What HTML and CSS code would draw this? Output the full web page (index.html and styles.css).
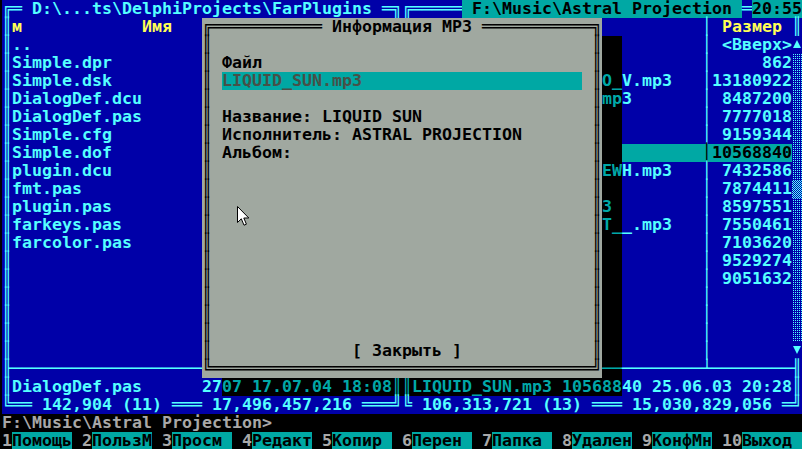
FILE: index.html
```html
<!DOCTYPE html>
<html lang="ru">
<head>
<meta charset="utf-8">
<title>Far Manager — Информация MP3</title>
<link rel="stylesheet" href="styles.css">
</head>
<body>
<div class="screen">
  <div class="panels">
    <section class="panel">
      <div class="row"><span class="ln">╔═</span><span> D:\...ts\DelphiProjects\FarPlugins </span><span class="ln">═╗</span></div>
      <div class="row"><span class="v">║</span><span class="fill y">м            Имя</span><span class="v"></span></div>
      <div class="row"><span class="v">║</span><span class="fill">..</span><span class="v"></span></div>
      <div class="row"><span class="v">║</span><span class="fill">Simple.dpr</span><span class="v"></span></div>
      <div class="row"><span class="v">║</span><span class="fill">Simple.dsk</span><span class="v"></span></div>
      <div class="row"><span class="v">║</span><span class="fill">DialogDef.dcu</span><span class="v"></span></div>
      <div class="row"><span class="v">║</span><span class="fill">DialogDef.pas</span><span class="v"></span></div>
      <div class="row"><span class="v">║</span><span class="fill">Simple.cfg</span><span class="v"></span></div>
      <div class="row"><span class="v">║</span><span class="fill">Simple.dof</span><span class="v"></span></div>
      <div class="row"><span class="v">║</span><span class="fill">plugin.dcu</span><span class="v"></span></div>
      <div class="row"><span class="v">║</span><span class="fill">fmt.pas</span><span class="v"></span></div>
      <div class="row"><span class="v">║</span><span class="fill">plugin.pas</span><span class="v"></span></div>
      <div class="row"><span class="v">║</span><span class="fill">farkeys.pas</span><span class="v"></span></div>
      <div class="row"><span class="v">║</span><span class="fill">farcolor.pas</span><span class="v"></span></div>
      <div class="row"><span class="v">║</span><span class="fill"></span><span class="v"></span></div>
      <div class="row"><span class="v">║</span><span class="fill"></span><span class="v"></span></div>
      <div class="row"><span class="v">║</span><span class="fill"></span><span class="v"></span></div>
      <div class="row"><span class="v">║</span><span class="fill"></span><span class="v"></span></div>
      <div class="row"><span class="v">║</span><span class="fill"></span><span class="v"></span></div>
      <div class="row"><span class="v">║</span><span class="fill"></span><span class="v"></span></div>
      <div class="row"><span class="ln">╟───────────────────</span><span class="fill"></span></div>
      <div class="row"><span class="v">║</span><span class="fill">DialogDef.pas      27</span><span class="sh">07 17.07.04 18:08</span><span class="v sh">║</span></div>
      <div class="row"><span class="ln">╚══</span><span> 142,904 (11) </span><span class="ln">═══</span><span> 17,496,457,216 </span><span class="ln">═══╝</span></div>
    </section>
    <section class="panel">
      <div class="row"><span class="ln">╔═════</span><span class="hi"> F:\Music\Astral Projection </span><span class="ln">═</span><span class="hi">20:55</span></div>
      <div class="row"><span class="v"></span><span class="na"></span><span class="ns"></span><span class="nb"></span><span class="v">│</span><span class="sz y">Размер </span><span class="v">║</span></div>
      <div class="row"><span class="v"></span><span class="na"></span><span class="ns sh"></span><span class="nb"></span><span class="v">│</span><span class="sz">&lt;Вверх&gt;</span><span class="sb up"></span></div>
      <div class="row"><span class="v"></span><span class="na"></span><span class="ns sh"></span><span class="nb"></span><span class="v">│</span><span class="sz">862</span><span class="sb trk"></span></div>
      <div class="row"><span class="v"></span><span class="na"></span><span class="ns sh">O_</span><span class="nb">V.mp3</span><span class="v">│</span><span class="sz">13180922</span><span class="sb trk"></span></div>
      <div class="row"><span class="v"></span><span class="na"></span><span class="ns sh">mp</span><span class="nb">3</span><span class="v">│</span><span class="sz">8487200</span><span class="sb trk"></span></div>
      <div class="row"><span class="v"></span><span class="na"></span><span class="ns sh"></span><span class="nb"></span><span class="v">│</span><span class="sz">7777018</span><span class="sb trk"></span></div>
      <div class="row"><span class="v"></span><span class="na"></span><span class="ns sh"></span><span class="nb"></span><span class="v">│</span><span class="sz">9159344</span><span class="sb trk"></span></div>
      <div class="row"><span class="v"></span><span class="na hi"></span><span class="ns sh"></span><span class="nb hi"></span><span class="v hi">│</span><span class="sz hi">10568840</span><span class="sb trk"></span></div>
      <div class="row"><span class="v"></span><span class="na"></span><span class="ns sh">EW</span><span class="nb">H.mp3</span><span class="v">│</span><span class="sz">7432586</span><span class="sb trk"></span></div>
      <div class="row"><span class="v"></span><span class="na"></span><span class="ns sh"></span><span class="nb"></span><span class="v">│</span><span class="sz">7874411</span><span class="sb thumb"></span></div>
      <div class="row"><span class="v"></span><span class="na"></span><span class="ns sh">3</span><span class="nb"></span><span class="v">│</span><span class="sz">8597551</span><span class="sb trk"></span></div>
      <div class="row"><span class="v"></span><span class="na"></span><span class="ns sh">T_</span><span class="nb">_.mp3</span><span class="v">│</span><span class="sz">7550461</span><span class="sb trk"></span></div>
      <div class="row"><span class="v"></span><span class="na"></span><span class="ns sh"></span><span class="nb"></span><span class="v">│</span><span class="sz">7103620</span><span class="sb trk"></span></div>
      <div class="row"><span class="v"></span><span class="na"></span><span class="ns sh"></span><span class="nb"></span><span class="v">│</span><span class="sz">9529274</span><span class="sb trk"></span></div>
      <div class="row"><span class="v"></span><span class="na"></span><span class="ns sh"></span><span class="nb"></span><span class="v">│</span><span class="sz">9051632</span><span class="sb trk"></span></div>
      <div class="row"><span class="v"></span><span class="na"></span><span class="ns sh"></span><span class="nb"></span><span class="v">│</span><span class="sz"></span><span class="sb trk"></span></div>
      <div class="row"><span class="v"></span><span class="na"></span><span class="ns sh"></span><span class="nb"></span><span class="v">│</span><span class="sz"></span><span class="sb trk"></span></div>
      <div class="row"><span class="v"></span><span class="na"></span><span class="ns sh"></span><span class="nb"></span><span class="v">│</span><span class="sz"></span><span class="sb trk"></span></div>
      <div class="row"><span class="v"></span><span class="na"></span><span class="ns sh"></span><span class="nb"></span><span class="v">│</span><span class="sz"></span><span class="sb dn"></span></div>
      <div class="row"><span class="v"></span><span class="na"></span><span class="ln sh">──</span><span class="ln">────────┴────────╢</span></div>
      <div class="row"><span class="v sh">║</span><span class="sh">LIQUID_SUN.mp3 105688</span><span>40 25.06.03 20:28</span><span class="v">║</span></div>
      <div class="row"><span class="ln">╚</span><span> 106,313,721 (13) </span><span class="ln">═══</span><span> 15,030,829,056 </span><span class="ln">═╝</span></div>
    </section>
  </div>

  <div class="row cmd"><span>F:\Music\Astral Projection&gt;</span></div>

  <div class="row keybar">
    <span class="key"><span class="kn">1</span><span class="kl">Помощь</span></span>
    <span class="key"><span class="kn">2</span><span class="kl">ПользМ</span></span>
    <span class="key"><span class="kn">3</span><span class="kl">Просм</span></span>
    <span class="key"><span class="kn">4</span><span class="kl">Редакт</span></span>
    <span class="key"><span class="kn">5</span><span class="kl">Копир</span></span>
    <span class="key"><span class="kn">6</span><span class="kl">Перен</span></span>
    <span class="key"><span class="kn">7</span><span class="kl">Папка</span></span>
    <span class="key"><span class="kn">8</span><span class="kl">Удален</span></span>
    <span class="key"><span class="kn">9</span><span class="kl">КонфМн</span></span>
    <span class="key"><span class="kn">10</span><span class="kl">Выход</span></span>
  </div>

  <div class="dialog">
    <div class="row"><span class="ln">╔═══════════</span><span> Информация MP3 </span><span class="ln">═══════════╗</span></div>
    <div class="row"><span class="v">║</span><span class="fill"></span><span class="v">║</span></div>
    <div class="row"><span class="v">║</span><span class="fill"> Файл</span><span class="v">║</span></div>
    <div class="row"><span class="v">║</span><span class="gap"> </span><span class="edit">LIQUID_SUN.mp3</span><span class="fill"></span><span class="v">║</span></div>
    <div class="row"><span class="v">║</span><span class="fill"></span><span class="v">║</span></div>
    <div class="row"><span class="v">║</span><span class="fill"> Название: LIQUID SUN</span><span class="v">║</span></div>
    <div class="row"><span class="v">║</span><span class="fill"> Исполнитель: ASTRAL PROJECTION</span><span class="v">║</span></div>
    <div class="row"><span class="v">║</span><span class="fill"> Альбом:</span><span class="v">║</span></div>
    <div class="row"><span class="v">║</span><span class="fill"></span><span class="v">║</span></div>
    <div class="row"><span class="v">║</span><span class="fill"></span><span class="v">║</span></div>
    <div class="row"><span class="v">║</span><span class="fill"></span><span class="v">║</span></div>
    <div class="row"><span class="v">║</span><span class="fill"></span><span class="v">║</span></div>
    <div class="row"><span class="v">║</span><span class="fill"></span><span class="v">║</span></div>
    <div class="row"><span class="v">║</span><span class="fill"></span><span class="v">║</span></div>
    <div class="row"><span class="v">║</span><span class="fill"></span><span class="v">║</span></div>
    <div class="row"><span class="v">║</span><span class="fill"></span><span class="v">║</span></div>
    <div class="row"><span class="v">║</span><span class="fill"></span><span class="v">║</span></div>
    <div class="row"><span class="v">║</span><span class="fill"></span><span class="v">║</span></div>
    <div class="row"><span class="v">║</span><span class="fill">              [ Закрыть ]</span><span class="v">║</span></div>
    <div class="row"><span class="ln">╚══════════════════════════════════════╝</span></div>
  </div>

  <svg class="mouse" width="13" height="21" viewBox="0 0 13 21" aria-hidden="true">
    <path d="M0.5 0.5 V16.5 L4.3 12.8 L7 19.2 L9.4 18.2 L6.8 12 H11.8 Z" fill="#fff" stroke="#000" stroke-width="1" stroke-linejoin="miter"/>
  </svg>
</div>
</body>
</html>
```
FILE: styles.css
```css
* { box-sizing: border-box; }

html, body {
  margin: 0;
  background: #000;
}

body { overflow: hidden; }

.screen {
  position: relative;
  width: 800px;
  height: 450px;
  margin-left: 2px;
  font-family: "DejaVu Sans Mono", monospace;
  font-size: 16.61px;
  font-weight: bold;
  line-height: 18px;
}

.row {
  display: flex;
  height: 18px;
  white-space: pre;
}

.row > span { flex: none; height: 18px; }
.row > .fill { flex: 1 1 0; min-width: 0; }

/* box-drawing characters are drawn thin, like the console font */
.row > .v, .row > .ln { font-weight: normal; }

.panels { display: flex; }

.panel {
  width: 400px;
  background: #0000A8;
  color: #55FFFF;
}

.v { width: 10px; }
.y { color: #FFFF55; }
.sh { background: #000; color: #00A8A8; }
.hi { background: #00A8A4; color: #000; }

.na { width: 190px; }
.ns { width: 20px; }
.nb { width: 80px; }
.sz { width: 80px; text-align: right; }
.sb { width: 10px; }

.trk {
  background: conic-gradient(at 1px 1px, transparent 75%, #55FFFF 0) 1px 0 / 2px 2px;
}

.thumb {
  background: repeating-conic-gradient(#55FFFF 0 25%, transparent 0 50%) 0 0 / 2px 2px;
}

.row > .up, .row > .dn { display: flex; align-items: flex-start; }

.up::after {
  content: "";
  margin: 4px 0 0 1px;
  border-style: solid;
  border-color: transparent transparent #55FFFF;
  border-width: 0 4px 8px;
}

.dn::after {
  content: "";
  margin: 4px 0 0 1px;
  border-style: solid;
  border-color: #55FFFF transparent transparent;
  border-width: 8px 4px 0;
}

.cmd { color: #A8A8A8; }

.keybar { color: #A8A8A8; }
.row > .key { display: flex; width: 80px; }
.kn, .kl { height: 18px; }
.kl { width: 60px; background: #00A8A4; color: #000; }

.dialog {
  position: absolute;
  left: 200px;
  top: 18px;
  width: 400px;
  height: 360px;
  background: #A0A8A0;
  color: #000;
}

.gap { width: 10px; }
.edit { width: 360px; background: #00A8A4; color: #485048; }

.mouse {
  position: absolute;
  left: 235px;
  top: 206px;
}
```
